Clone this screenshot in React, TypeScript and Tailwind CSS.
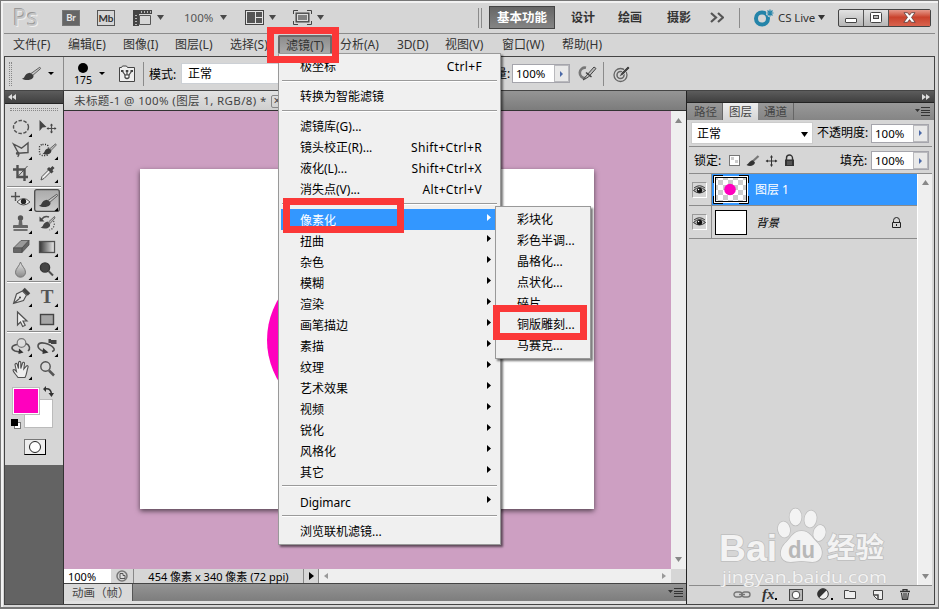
import type { ReactNode } from "react";
import clsx from "clsx";

const menuBar = [
  { label: "文件(F)", width: "w-[55px]" },
  { label: "编辑(E)", width: "w-[55px]" },
  { label: "图像(I)", width: "w-[52px]" },
  { label: "图层(L)", width: "w-[55px]" },
  { label: "选择(S)", width: "w-[48px]" },
  { label: "滤镜(T)", width: "w-[54px]", active: true },
  { label: "分析(A)", width: "w-[57px] ml-2" },
  { label: "3D(D)", width: "w-[48px]" },
  { label: "视图(V)", width: "w-[57px]" },
  { label: "窗口(W)", width: "w-[60px]" },
  { label: "帮助(H)", width: "w-[60px]" },
];

type Item = { label: string; keys?: string; sub?: boolean; active?: boolean };

const filterMenu: Item[][] = [
  [{ label: "极坐标", keys: "Ctrl+F" }],
  [{ label: "转换为智能滤镜" }],
  [
    { label: "滤镜库(G)..." },
    { label: "镜头校正(R)...", keys: "Shift+Ctrl+R" },
    { label: "液化(L)...", keys: "Shift+Ctrl+X" },
    { label: "消失点(V)...", keys: "Alt+Ctrl+V" },
  ],
  [
    { label: "像素化", sub: true, active: true },
    { label: "扭曲", sub: true },
    { label: "杂色", sub: true },
    { label: "模糊", sub: true },
    { label: "渲染", sub: true },
    { label: "画笔描边", sub: true },
    { label: "素描", sub: true },
    { label: "纹理", sub: true },
    { label: "艺术效果", sub: true },
    { label: "视频", sub: true },
    { label: "锐化", sub: true },
    { label: "风格化", sub: true },
    { label: "其它", sub: true },
  ],
  [{ label: "Digimarc", sub: true }],
  [{ label: "浏览联机滤镜..." }],
];

const pixelate = ["彩块化", "彩色半调...", "晶格化...", "点状化...", "碎片", "铜版雕刻...", "马赛克..."];

function Caret({ className }: { className?: string }) {
  return (
    <svg width="7" height="5" viewBox="0 0 7 5" className={clsx("shrink-0", className)}>
      <path d="M0 0h7L3.5 5z" fill="currentColor" />
    </svg>
  );
}

function SmallCaret({ className }: { className?: string }) {
  return (
    <svg width="6" height="3" viewBox="0 0 6 3" className={clsx("shrink-0", className)}>
      <path d="M0 0h6L3 3z" fill="#000" />
    </svg>
  );
}

function Brush() {
  return (
    <>
      <path d="M22.800 5.200 14 11.500l1.800 1.800L23.600 6.600z" fill="#c4c4c4" stroke="#555" strokeWidth=".9" />
      <path d="M13 10.800c-3 .2-4.600 2-5.400 3.700-.6 1.400-1.500 2-2.800 2.300 3.500 1.800 8.800 1.700 11-.8 1-1.200.8-2.300.2-3.100z" fill="#3c3c3c" stroke="none" />
    </>
  );
}

function Tool({ children, corner = true, active }: { children: ReactNode; corner?: boolean; active?: boolean }) {
  return (
    <svg width="26" height="23" viewBox="0 0 26 23" fill="none" stroke="#505050" strokeWidth="1.4" className="block">
      {active && <rect x=".7" y=".7" width="24.600" height="21.600" rx="2" fill="url(#pressed)" stroke="#4c4c4c" strokeWidth="1.300" />}
      {children}
      {corner && <path d="M24 18.500V22h-3.500z" fill="#000" stroke="none" />}
    </svg>
  );
}

function Eye() {
  return (
    <span className="flex h-4 w-[15px] -translate-x-px items-center justify-center border border-[#999] border-r-white border-b-white">
      <svg width="13" height="10" viewBox="0 0 13 10">
        <path d="M.5 5.500Q6.500-.5 12.500 5.500 6.500 10.500.5 5.500z" fill="#bbb" stroke="#333" />
        <circle cx="6.500" cy="5.300" r="2.600" fill="#111" />
        <path d="M1 3Q6.500-1.500 12 3" fill="none" stroke="#333" />
        <circle cx="5.600" cy="4.500" r=".7" fill="#fff" />
      </svg>
    </span>
  );
}

function Separator() {
  return (
    <div className="h-[9px] pt-[3px] px-px">
      <div className="h-[2px] border-t border-[#9a9a9a] bg-white" />
    </div>
  );
}

function Percent({ className }: { className?: string }) {
  return (
    <div className={clsx("flex h-[19px] border border-[#a5a5ac] bg-white", className)}>
      <span className="w-[41px] pl-[3px] text-[11.500px] leading-[17px] text-black">100%</span>
      <span className="flex flex-1 items-center justify-center border border-[#b9b9bd] bg-[#e9e9e9]">
        <svg width="3" height="6" viewBox="0 0 3 6"><path d="M0 0l3 3-3 3z" fill="#4c6aa8" /></svg>
      </span>
    </div>
  );
}

function AppBar() {
  return (
    <div className="flex h-[32px] items-center border-b border-[#8b8b8b] text-[#4a4a4a]">
      <span className="ml-[9px] w-[50px] text-[23px] leading-none text-[#c6c6c6] [text-shadow:-1px_-1px_0_#999,1px_1px_0_#eee]">Ps</span>
      <span className="h-[14px] w-4 bg-[#666] text-center font-[Lato] text-[9.500px] font-bold leading-[14px] text-[#e6e6e6] shadow-[0_0_0_1px_#777]">Br</span>
      <span className="ml-[18px] h-[16px] w-[18px] border border-[#555] text-center font-[Lato] text-[10px] font-bold leading-[14px] text-[#333]">Mb</span>
      <svg width="19" height="16" viewBox="0 0 19 16" className="ml-[18px]">
        <path d="M0 0h19v4H6v12H0z" fill="#454545" />
        <path d="M6.500 5.500h11v9h-11z" fill="#d6d6d6" stroke="#555" />
        <path d="M8 2h10M3 5v10" stroke="#ddd" strokeWidth="1.500" strokeDasharray="1 2" />
      </svg>
      <Caret className="ml-[5px]" />
      <span className="ml-5 w-[30px] text-[11.500px] leading-4 text-[#555]">100%</span>
      <Caret className="ml-[6px]" />
      <svg width="19" height="15" viewBox="0 0 19 15" className="ml-[18px]">
        <rect x=".5" y=".5" width="18" height="14" fill="#e5e5e5" stroke="#444" />
        <path d="M2 2h8v11H2zM11 2h6v5h-6zM11 8h6v5h-6z" fill="#555" />
      </svg>
      <Caret className="ml-[5px]" />
      <svg width="19" height="15" viewBox="0 0 19 15" className="ml-[17px]">
        <path d="M.5 4V.5H5M14 .5h4.500V4M18.500 11v3.500H14M5 14.500H.5V11" fill="none" stroke="#444" />
        <rect x="3" y="3" width="13" height="9" fill="#666" stroke="#444" />
        <rect x="4.500" y="4.500" width="10" height="6" fill="#808080" stroke="#ddd" />
      </svg>
      <Caret className="ml-[5px]" />
      <span className="ml-[154px] h-5 w-[4px] border-x border-[#8b8b8b]" />
      <span className="ml-[7px] h-[23px] w-[66px] border border-[#444] bg-linear-to-b from-[#666] to-[#858585] text-center text-[12.500px] font-bold leading-[21px] text-white">基本功能</span>
      <span className="ml-4 w-[47px] text-xs font-bold text-[#333]">设计</span>
      <span className="w-[49px] text-xs font-bold text-[#333]">绘画</span>
      <span className="w-[43px] text-xs font-bold text-[#333]">摄影</span>
      <svg width="14" height="11" viewBox="0 0 14 11" fill="none" stroke="#555" strokeWidth="2.200"><path d="m1 1 5 4.500L1 10M8 1l5 4.500L8 10" /></svg>
      <span className="ml-[15px] h-5 border-l border-[#8b8b8b]" />
      <svg width="21" height="18" viewBox="0 0 21 18" className="ml-[14px]" fill="none" stroke="#2484a9">
        <circle cx="8" cy="9.500" r="6" strokeWidth="4" />
        <path d="M16 0v8M12 4h8M13.300 1.300l5.400 5.400M18.700 1.300l-5.400 5.400" stroke="#d6d6d6" strokeWidth="3" />
        <path d="M16 .5v7M12.500 4h7M13.500 1.500l5 5M18.500 1.500l-5 5" strokeWidth="1.200" />
      </svg>
      <span className="ml-[3px] w-[39px] whitespace-nowrap text-[11.500px] tracking-[-.1px] text-[#333]">CS Live</span>
      <Caret className="ml-px text-[#333]" />
      <div className="ml-[13px] flex h-[18px] w-[93px] rounded-[2px] border border-[#444] bg-linear-to-b from-[#e2e2e2] to-[#b6b6b6]">
        <span className="flex w-[25px] items-end justify-center border-r border-[#555] pb-[3px]">
          <span className="h-[5px] w-3 rounded-[1px] border border-[#444] bg-white" />
        </span>
        <span className="flex w-[25px] items-center justify-center border-r border-[#555]">
          <svg width="12" height="11" viewBox="0 0 12 11"><rect x=".5" y=".5" width="11" height="10" rx="1" fill="#fff" stroke="#444" /><rect x="3.500" y="3.500" width="5" height="3" fill="#bbb" stroke="#444" /></svg>
        </span>
        <span className="flex flex-1 items-center justify-center bg-linear-to-b from-[#e5988b] via-[#c9412c] via-45% to-[#d9634e]">
          <svg width="13" height="11" viewBox="0 0 13 11"><path d="M1 .7h3.500l2 2.500 2-2.500H12L8.500 5.400l3.700 4.900H8.500l-2-2.700-2 2.700H.8l3.700-4.900z" fill="#fff" stroke="#553b3b" strokeWidth=".8" /></svg>
        </span>
      </div>
    </div>
  );
}

function MenuBar() {
  return (
    <div className="flex h-[22px] items-start pl-[9px] pt-px text-xs leading-[20px] text-[#333]">
      {menuBar.map((m) => (
        <span
          key={m.label}
          className={clsx(
            "h-[20px] shrink-0 whitespace-nowrap",
            m.width,
            m.active && "rounded-t-[2px] border-2 border-b-0 border-[#6b6b6b] bg-linear-to-b from-[#8d8d8d] to-[#adadad] text-center leading-[17px]",
          )}
        >
          {m.label}
        </span>
      ))}
    </div>
  );
}

function OptionsBar() {
  return (
    <div className="flex h-[33px] shrink-0 items-center text-xs text-black">
      <span className="ml-1 h-[24px] w-[3px] border-x border-dotted border-[#888]" />
      <svg width="26" height="23" viewBox="0 0 26 23" className="ml-[5px]"><Brush /></svg>
      <SmallCaret className="ml-[5px]" />
      <span className="ml-[9px] h-full border-l border-[#8b8b8b]" />
      <div className="ml-[9px] flex h-full w-5 flex-col items-center pt-[6px]">
        <span className="size-[10px] rounded-full bg-black" />
        <span className="mt-px text-[10.500px] leading-[13px]">175</span>
      </div>
      <SmallCaret className="ml-[6px]" />
      <svg width="18" height="18" viewBox="0 0 18 18" className="ml-[13px]" fill="none" stroke="#444">
        <path d="M1.500 16.500v-14h2l1-1.500h4l1 1.500h7v14z" fill="#eee" />
        <path d="m4.500 6.500 3 4M9 6v4m4.500-3.500-3 4" strokeWidth="1.200" />
        <path d="M3 6h2.500M7.800 6h2.500M12.500 6H15" strokeWidth="2" />
        <path d="M7 10h4v2.500q-2 2-4 0z" strokeWidth="1.200" fill="#fff" />
      </svg>
      <span className="ml-[7px] h-[24px] border-l border-[#8b8b8b]" />
      <span className="ml-[5px] w-[32px] whitespace-nowrap pt-[2px]">模式:</span>
      <span className="h-[21px] w-[130px] border border-[#ccd0d5] bg-white pl-[6px] leading-[20px]">正常</span>
      <span className="ml-[172px] w-[29px] whitespace-nowrap">流量:</span>
      <Percent className="w-[58px]" />
      <svg width="19" height="17" viewBox="0 0 19 17" className="ml-[8px]" fill="none" stroke="#666">
        <path d="M8 2.800A5 5.200 0 1 0 7.500 13" strokeWidth="2.600" stroke="#777" />
        <path d="m5 15 3.500-4.500L16 2l2 1.500L10.500 12z" fill="#bbb" stroke="#444" />
        <path d="m8 7.500 5.500 4.500" stroke="#444" strokeWidth="1.600" />
      </svg>
      <span className="ml-[6px] h-[24px] border-l border-[#8b8b8b]" />
      <svg width="18" height="18" viewBox="0 0 18 18" className="ml-[9px]" fill="none" stroke="#666">
        <circle cx="7.500" cy="10" r="6.500" strokeWidth="1.300" />
        <circle cx="7.500" cy="10" r="3.500" strokeWidth="1.500" />
        <path d="m6 12 2-4 7-7 2 2-7 7z" fill="#444" stroke="#eee" strokeWidth=".6" />
      </svg>
    </div>
  );
}

function ToolRule({ className }: { className?: string }) {
  return <div className={clsx("mx-[-1px] border-b border-white", className)}><div className="border-b border-[#8b8b8b]" /></div>;
}

function Toolbox() {
  return (
    <div className="flex w-[59px] shrink-0 flex-col border-r border-[#333] bg-[#636363]">
      <div className="flex h-3 items-center bg-linear-to-b from-[#5c5c5c] to-[#404040] pl-[3px]">
        <svg width="8" height="6" viewBox="0 0 8 6"><path d="M4 0v6L0 3zM8 0v6L4 3z" fill="#ddd" /></svg>
      </div>
      <div className="h-[362px] border-t border-[#222] bg-[#d6d6d6] px-[3px]">
        <div className="mx-[2px] mt-[4px] h-[3px] border-y border-dotted border-[#888]" />
        <div className="grid grid-cols-2 pt-[4px]">
          <Tool><ellipse cx="13" cy="12" rx="7.500" ry="6.500" strokeDasharray="3.500 1.500" /></Tool>
          <Tool corner={false}>
            <path d="M5.500 5v11l3-3.500 4-.5z" fill="#444" stroke="none" />
            <path d="M17.500 9v9M13 13.500h9" strokeWidth="1.200" />
            <path d="m16 10.500 1.500-2 1.500 2zM16 16.500l1.500 2 1.500-2zM14.500 12l-2 1.500 2 1.500zM20.500 12l2 1.500-2 1.500z" fill="#444" stroke="none" />
          </Tool>
          <Tool><path d="m5.500 6 8 4.200L20 5v9.500l-9.500.8zm5 9.500c-1.500 1.500-3-.2-1-1.200 2-.5 2 2 .2 4.500" /></Tool>
          <Tool>
            <rect x="5.500" y="6.500" width="9" height="11" rx="3" strokeDasharray="1 1.500" stroke="#222" />
            <path d="m21.500 5.800-6 5.200 1.500 1.500 5.300-5.500z" fill="#bbb" strokeWidth=".8" />
            <path d="M15 10.300c-3 .2-3.800 2-4.500 3.400-.6 1-1 1.500-2 1.800 2.800 1.600 6.500 1.200 8.200-.8.800-1 .8-2 .2-2.700z" fill="#3c3c3c" stroke="none" />
          </Tool>
          <Tool><path d="M9.500 4v12H20M5 8.500h11.500V20" strokeWidth="2.400" /><path d="M9 16.500 19.500 5" strokeWidth="1" /></Tool>
          <Tool>
            <path d="m7 19 1-3.500 8-8 2 2-8 8z" fill="#eee" strokeWidth="1" />
            <path d="m14 7 4.500 4.500M16.500 9l3-3" strokeWidth="3" stroke="#444" />
          </Tool>
        </div>
        <ToolRule className="mt-[2px] mb-px" />
        <div className="grid grid-cols-2">
          <Tool>
            <path d="M7.500 3v9M3 7.500h9" />
            <path d="M9 13q6.500-7 13 0-6.500 6-13 0z" fill="#eee" strokeWidth="1" />
            <circle cx="15.500" cy="12.500" r="2.700" fill="#222" stroke="none" />
          </Tool>
          <Tool active><Brush /></Tool>
          <Tool>
            <circle cx="12.500" cy="6" r="2.700" fill="#555" stroke="none" />
            <path d="M11 8h3l.5 5H19q1 0 1 1v2H5v-2q0-1 1-1h4.500z" fill="#666" stroke="none" />
            <path d="M5.500 18h14" stroke="#444" />
          </Tool>
          <Tool>
            <path d="m20.500 4.500-6 5.500 1.500 1.500L21 6z" fill="#bbb" strokeWidth=".8" />
            <path d="M13.500 9.500c-3 .5-3.800 2.500-4.500 4-.6 1.200-1.300 1.700-2.500 2 3 1.700 7 1.500 9-.8.800-1 .8-2.200.2-3z" fill="#444" stroke="none" />
            <path d="M7.500 7.500c2-3 5-3.500 7.500-2.500" strokeWidth="1.500" />
            <path d="M5.500 4.500v5h5z" fill="#444" stroke="none" />
            <path d="M19.500 9c2 4 0 8-4 9" strokeWidth="1.200" strokeDasharray="1.200 1.500" />
          </Tool>
          <Tool>
            <path d="M5.500 13 13 5.500h8L14 13z" fill="#999" strokeWidth=".8" />
            <path d="M5.500 13H14v4.500H5.500zM14 13l7-7.500V10l-7 7.500z" fill="#666" strokeWidth=".8" />
          </Tool>
          <Tool><rect x="5.500" y="6.500" width="15" height="11" fill="url(#ramp)" strokeWidth="1.300" /></Tool>
          <Tool><path d="M12.500 4c1 4 5 6.500 5 10.200a5 5 0 0 1-10 0C7.500 10.500 11.500 8 12.500 4z" fill="url(#drop)" strokeWidth="1" stroke="#777" /></Tool>
          <Tool><circle cx="11" cy="9.500" r="4.600" fill="#444" stroke="#333" /><path d="m14.500 13 4.500 4.500" strokeWidth="2" /></Tool>
        </div>
        <ToolRule className="mt-0 mb-[2px]" />
        <div className="grid grid-cols-2">
          <Tool>
            <path d="m5.500 18.500 3-9.500 6-3 4 4-3 5.500zm0 0 6-5" fill="#e4e4e4" strokeWidth="1.100" />
            <circle cx="12" cy="12.500" r="1" fill="#333" stroke="none" />
            <path d="m15.500 4 5.500 5.500" strokeWidth="3.500" stroke="#444" />
          </Tool>
          <Tool><text x="13" y="17.500" textAnchor="middle" stroke="none" fill="#555" fontSize="19" fontWeight="bold" fontFamily="'Liberation Serif', serif">T</text></Tool>
          <Tool><path d="M9.500 4v13l3-3 2.200 4.500 2.500-1.200-2.200-4.300H19z" fill="#eee" strokeWidth="1.200" /></Tool>
          <Tool><rect x="6.500" y="6.500" width="13" height="10" fill="#a6a6a6" stroke="#444" /></Tool>
        </div>
        <ToolRule className="mt-0 mb-[2px]" />
        <div className="grid grid-cols-2">
          <Tool>
            <path d="M9 9.500c-6 1-6.500 4.500-2 6.500l4.500 1M18 8.500c4 1.500 4.500 5.500 2 7.500" strokeWidth="1.600" />
            <circle cx="13.500" cy="8" r="4.300" fill="#ddd" stroke="#777" strokeWidth="1.200" />
            <path d="m11 13.500-.5 5.500 5-1.500z" fill="#333" stroke="none" />
          </Tool>
          <Tool>
            <path d="M9.500 16.500C1 12.500 3 6.500 11 8.200c8 1.800 12 7.300 7 8.300" strokeWidth="1.600" />
            <path d="m9 13-.5 6 6-1.500z" fill="#333" stroke="none" />
            <path d="M14.500 4h2.500v1h5.500v4H17V8h-2.500z" fill="#444" stroke="none" />
          </Tool>
          <Tool>
            <path d="M10 19.500c-2-3-5-5.500-5-7.500 1-1.500 2.500.5 3.500 1.500L7 6.500c.5-1.700 2-1.300 2.300 0l1.200 4V4.500c.5-1.500 2-1.500 2.300 0v6L14.500 5c.7-1.300 2-.7 2 .5l-.7 5.500L18.500 8c1-.8 2 0 1.500 1.200-1.500 4-1 7-3 10.300z" fill="#eee" strokeWidth="1.100" />
          </Tool>
          <Tool corner={false}><circle cx="11.500" cy="8.500" r="4.700" fill="#d9d9d9" strokeWidth="1.400" /><path d="m15 12.500 5 5" strokeWidth="2.500" stroke="#555" /></Tool>
        </div>
        {/* foreground / background colours */}
        <div className="relative mt-[5px] h-[44px]">
          <span className="absolute left-4 top-[13px] size-[29px] border border-[#bbb] bg-white" />
          <span className="absolute left-1 top-px size-[28px] border border-[#bbb] bg-[#ff00be] p-px shadow-[inset_0_0_0_1px_#fff]" />
          <svg width="11" height="11" viewBox="0 0 11 11" className="absolute left-[35px] top-0"><path d="M2 3c4-1 6 1 6.500 5" fill="none" stroke="#333" strokeWidth="1.600" /><path d="M0 3l3-3v6zM5.500 7h5.500L8.500 11z" fill="#333" /></svg>
          <span className="absolute left-[6px] top-[36px] size-[7px] border border-[#777] bg-white" />
          <span className="absolute left-[3px] top-[33px] size-[7px] bg-black" />
        </div>
        <div className="mx-auto mt-[9px] flex h-4 w-[22px] translate-x-px items-center justify-center border border-[#777] border-b-black border-r-black bg-[#eee]">
          <span className="size-3 rounded-full border border-[#222] bg-white" />
        </div>
      </div>
    </div>
  );
}

function Canvas() {
  return (
    <div className="flex w-[623px] shrink-0 flex-col border-r border-[#222]">
      <div className="flex h-5 shrink-0 border-b border-[#333] bg-linear-to-b from-[#959595] to-[#7c7c7c]">
        <div className="flex w-[225px] items-center whitespace-nowrap bg-linear-to-b from-[#e2e2e2] to-[#cfcfcf] pl-[10px] pt-px text-[11.500px] text-[#444]">
          <span className="w-[197px] tracking-[.38px]">未标题-1 @ 100% (图层 1, RGB/8) *</span>
          <span className="h-[13px] w-3 rounded-[2px] border border-[#888] text-center text-[12px] leading-[10px]">×</span>
        </div>
      </div>
      <div className="flex h-[458px] shrink-0">
        <div className="w-[607px] overflow-hidden bg-[#cd9fc2] pl-[76px] pt-[58px]">
          <div className="h-[340px] w-[454px] bg-white pl-[127px] pt-[91px] shadow-[0_2px_5px_#0009]">
            <div className="size-[160px] rounded-full bg-[#ff00be]" />
          </div>
        </div>
        <div className="flex flex-1 flex-col items-center justify-between bg-[#efefef] py-[7px] text-[#888]">
          <Caret className="rotate-180" />
          <Caret />
        </div>
      </div>
      <div className="flex h-[15px] shrink-0 border-b border-[#444] text-[11px] leading-[15px] text-black">
        <span className="w-[47px] bg-white pl-1">100%</span>
        <span className="flex w-[23px] items-center justify-center border-r border-[#888] bg-[#d6d6d6]">
          <svg width="12" height="12" viewBox="0 0 12 12" fill="none" stroke="#777"><circle cx="6" cy="6" r="5" strokeWidth="1.500" /><path d="M4 3.500h3v2h2v3H4z" fill="#ddd" stroke="#555" /></svg>
        </span>
        <span className="w-[170px] whitespace-nowrap border-r border-[#888] bg-[#d6d6d6] text-center">454 像素 x 340 像素 (72 ppi)</span>
        <span className="flex w-[15px] items-center justify-center border-r border-[#888] bg-[#d6d6d6]">
          <svg width="5" height="8" viewBox="0 0 5 8"><path d="M0 0l5 4-5 4z" /></svg>
        </span>
        <span className="flex w-[352px] items-center justify-between bg-[#efefef] px-[5px]">
          <svg width="4" height="6" viewBox="0 0 4 6"><path d="M4 0v6L0 3z" fill="#999" /></svg>
          <svg width="4" height="6" viewBox="0 0 4 6"><path d="M0 0v6l4-3z" fill="#999" /></svg>
        </span>
        <span className="flex-1 bg-[#d6d6d6]" />
      </div>
      <div className="flex h-[17px] shrink-0 items-stretch bg-linear-to-b from-[#949494] to-[#7d7d7d]">
        <span className="w-[69px] whitespace-nowrap border-r border-[#555] bg-[#d9d9d9] pl-2 text-[11.500px] leading-[18px] text-[#444]">动画（帧）</span>
        <PanelMenuIcon className="ml-auto mr-[3px]" />
      </div>
      <div className="flex-1 bg-[#e0e0e0]" />
    </div>
  );
}

function PanelMenuIcon({ className }: { className?: string }) {
  return (
    <svg width="15" height="9" viewBox="0 0 15 9" className={clsx("shrink-0 self-center", className)}>
      <path d="M0 2h5L2.500 5zM6 0h9v1H6zM6 3h9v1H6zM6 5h9v1H6zM6 8h9v1H6z" fill="#333" />
    </svg>
  );
}

function LayersPanel() {
  return (
    <div className="flex flex-1 flex-col bg-[#d6d6d6] text-xs text-black">
      <div className="flex h-3 shrink-0 items-center justify-end border-b border-[#222] bg-linear-to-b from-[#5c5c5c] to-[#404040] pr-[4px]">
        <svg width="8" height="6" viewBox="0 0 8 6"><path d="M0 0v6l4-3zM4 0v6l4-3z" fill="#ddd" /></svg>
      </div>
      <div className="flex h-[17px] shrink-0 bg-linear-to-b from-[#999] to-[#858585] text-[11.500px] leading-[18px] text-[#444]">
        <span className="w-9 border-r border-[#666] pl-[7px]">路径</span>
        <span className="w-[35px] bg-linear-to-b from-[#eee] to-[#d6d6d6] text-center">图层</span>
        <span className="w-9 border-r border-[#666] text-center">通道</span>
        <PanelMenuIcon className="ml-auto mr-[4px]" />
      </div>
      <div className="mx-[2px] flex h-[27px] shrink-0 items-center border-b border-[#8b8b8b]">
        <span className="ml-[2px] flex h-[22px] w-[122px] items-center border border-[#ccc] bg-white pl-[5px] pr-[4px] pt-[2px]">正常<Caret className="ml-auto" /></span>
        <span className="ml-[4px] w-[54px] whitespace-nowrap">不透明度:</span>
        <Percent className="w-[58px]" />
      </div>
      <div className="mx-[2px] flex h-[27px] shrink-0 items-center border-b border-[#8b8b8b] pt-px">
        <span className="ml-[5px] w-[35px]">锁定:</span>
        <svg width="66" height="14" viewBox="0 0 66 14" fill="none" stroke="#333">
          <rect x=".5" y="1.500" width="10" height="10" fill="#fff" stroke="#777" />
          <path d="M2 3h3v3H2zM6 6h3v3H6z" fill="#ccc" stroke="none" />
          <path d="m29.500 2-6 5.500" strokeWidth="2.200" stroke="#777" />
          <path d="M24 6.500c-3-.5-3.500 2.500-6.500 4.500 3 2 8 1 8.500-2.500z" fill="#333" stroke="none" />
          <path d="M42.500 2v10M37.500 7h10" />
          <path d="m41 3.500 1.500-2.500L44 3.500zM41 10.500l1.500 2.500 1.500-2.500zM39 5.500 36.500 7 39 8.500zM46 5.500 48.500 7 46 8.500z" fill="#333" stroke="none" />
          <path d="M57.500 6V4a3 3 0 0 1 6 0v2" strokeWidth="1.400" />
          <path d="M56 5.500h9V12h-9z" fill="#333" stroke="none" />
          <path d="M58 8h5M58 10h5" stroke="#777" />
        </svg>
        <span className="ml-[45px] w-[31px] whitespace-nowrap">填充:</span>
        <Percent className="w-[58px]" />
      </div>
      <div className="mx-[2px] flex flex-1 border-b border-[#8b8b8b]">
        <div className="w-[228px]">
          <div className="flex h-[32px] items-center border-b border-[#8b8b8b] bg-[#3397ff] text-white">
            <span className="flex h-full w-[23px] items-center justify-center border-r border-[#8b8b8b] bg-[#d6d6d6]"><Eye /></span>
            <svg width="36" height="29" viewBox="0 0 36 29" className="ml-px">
              <defs>
                <pattern id="checks" width="10" height="10" patternUnits="userSpaceOnUse">
                  <path d="M0 0h10v10H0z" fill="#fff" />
                  <path d="M0 0h5v5H0zM5 5h5v5H5z" fill="#ccc" />
                </pattern>
              </defs>
              <path d="M.5 8V.5H10M26 .5h9.500V8M35.500 21v7.500H26M10 28.500H.5V21" fill="none" stroke="#000" />
              <rect x="1.500" y="1.500" width="33" height="26" fill="none" stroke="#fff" />
              <rect x="2.500" y="2.500" width="31" height="24" fill="url(#checks)" stroke="#000" />
              <circle cx="17" cy="14.500" r="5.800" fill="#ff00be" />
            </svg>
            <span className="ml-[6px] pt-px">图层 1</span>
          </div>
          <div className="flex h-[33px] items-center border-b border-[#8b8b8b]">
            <span className="flex h-full w-[23px] items-center justify-center border-r border-[#8b8b8b]"><Eye /></span>
            <span className="ml-[3px] h-[25px] w-8 border border-black bg-white" />
            <span className="ml-[9px] pt-px text-[11.500px] italic">背景</span>
            <svg width="11" height="11" viewBox="0 0 11 11" className="ml-auto mr-[15px]" fill="none" stroke="#222">
              <path d="M2.500 5V3.500a3 3 0 0 1 6 0V5M1.500 5.500h8v5h-8z" />
              <path d="M5 7h1v2H5z" fill="#222" stroke="none" />
            </svg>
          </div>
        </div>
        <div className="flex flex-1 flex-col items-center justify-between border-l border-white bg-[#efefef] py-[6px] text-[#888]">
          <Caret className="rotate-180" />
          <Caret />
        </div>
      </div>
      <div className="flex h-[18px] shrink-0 items-center pb-px pl-[46px]">
        <svg width="18" height="7" viewBox="0 0 18 7" fill="none" stroke="#777" strokeWidth="1.400"><rect x="1" y="1" width="8" height="5" rx="2.500" /><rect x="9" y="1" width="8" height="5" rx="2.500" /><path d="M6 3.500h6" /></svg>
        <span className="ml-[11px] w-[13px] font-[Liberation_Serif] text-[15px] font-bold italic leading-none text-[#333]">fx</span>
        <span className="mt-2 size-[2px] bg-black" />
        <svg width="14" height="12" viewBox="0 0 14 12" className="ml-[12px]"><rect x=".5" y=".5" width="13" height="11" fill="#bbb" stroke="#444" /><circle cx="7" cy="6" r="3.800" fill="#fff" stroke="#444" /></svg>
        <svg width="16" height="13" viewBox="0 0 16 13" className="ml-[14px]"><circle cx="6" cy="6" r="5.300" fill="#eee" stroke="#333" /><path d="M2.200 9.800A5.300 5.300 0 0 1 9.700 2.200z" fill="#333" /><path d="M14 10h2v2h-2z" /></svg>
        <svg width="12" height="9" viewBox="0 0 12 9" className="ml-[11px]"><path d="M.5 8.500v-8h4l1 1h6v7z" fill="#eee" stroke="#444" /></svg>
        <svg width="10" height="10" viewBox="0 0 10 10" className="ml-[17px]"><path d="M.5.500h9v9h-5l-4-4z" fill="#eee" stroke="#444" /><path d="M1 5h4v4" fill="none" stroke="#444" strokeWidth="1.500" /></svg>
        <svg width="10" height="11" viewBox="0 0 10 11" className="ml-[17px]" fill="none" stroke="#333"><path d="M0 2.500h10M3 2V.5h4V2" strokeWidth="1.300" /><path d="m1.500 4 1 6.500h5l1-6.500M4 4v6M6 4v6" strokeWidth="1.200" /></svg>
      </div>
    </div>
  );
}

function FilterMenu() {
  return (
    <div className="absolute left-[278px] top-[53px] w-[223px] border border-[#999] bg-[#f0f0f0] px-[2px] py-[2px] shadow-[2px_2px_2px_#0008]">
      {filterMenu.map((group, g) => (
        <div key={g}>
          {g > 0 && <Separator />}
          {group.map((item) => (
            <div
              key={item.label}
              className={clsx("flex h-[21px] items-center pl-[19px] pr-[7px] text-xs leading-[21px]", item.active ? "bg-[#3397ff] text-white" : "text-black")}
            >
              <span className={clsx(item.sub && "translate-y-px")}>{item.label}</span>
              {item.keys && <span className="ml-auto mr-[9px] tracking-[.35px]">{item.keys}</span>}
              {item.sub && (
                <svg width="4" height="7" viewBox="0 0 4 7" className="mb-[5px] ml-auto"><path d="M0 0l4 3.500L0 7z" fill="currentColor" /></svg>
              )}
            </div>
          ))}
        </div>
      ))}
    </div>
  );
}

function PixelateMenu() {
  return (
    <div className="absolute left-[495px] top-[206px] w-[96px] border border-[#999] bg-[#f0f0f0] py-[2px] shadow-[2px_2px_2px_#0008]">
      {pixelate.map((label) => (
        <div key={label} className="h-[21px] whitespace-nowrap pl-[21px] text-xs leading-[22px] text-black">{label}</div>
      ))}
    </div>
  );
}

function Watermark() {
  return (
    <svg width="180" height="84" viewBox="0 0 180 84" className="absolute left-[715px] top-[504px]" fill="#f3f3f3" stroke="#bebebe" strokeWidth="1.500" paintOrder="stroke">
      <text x="4" y="57" fontSize="37" fontWeight="bold" textLength="58" lengthAdjust="spacingAndGlyphs" fontFamily="'Liberation Sans', sans-serif">Bai</text>
      <ellipse cx="80.500" cy="13" rx="6" ry="8.500" />
      <ellipse cx="95.500" cy="15" rx="6" ry="8.500" transform="rotate(10 95.500 15)" />
      <ellipse cx="69" cy="25.500" rx="6" ry="8" transform="rotate(-12 69 25.500)" />
      <ellipse cx="104.500" cy="29" rx="6" ry="8" transform="rotate(15 104.500 29)" />
      <path d="M86.500 27c8 0 10 6 15 11 9 8 6 20-4 20-4 0-7-1-11-1s-7 1-11 1c-11 0-13-12-4-20 5-5 7-11 15-11z" />
      <text x="73" y="54" fontSize="24" fontWeight="bold" textLength="27" lengthAdjust="spacingAndGlyphs" fill="#b8b8b8" stroke="none" fontFamily="'Liberation Sans', sans-serif">du</text>
      <text x="112" y="54" fontSize="28" fontWeight="bold" textLength="57" lengthAdjust="spacingAndGlyphs" fontFamily="'Noto Sans CJK SC', sans-serif">经验</text>
      <text x="7" y="79" fontSize="17" textLength="165" lengthAdjust="spacingAndGlyphs" strokeWidth="1" stroke="#c8c8c8" fontFamily="'Open Sans', sans-serif">jingyan.baidu.com</text>
    </svg>
  );
}

export default function App() {
  return (
    <div className="relative h-[609px] w-[939px] overflow-hidden border-2 border-x border-t-1 border-[#777] bg-[#d6d6d6] px-[3px] pt-px font-['Noto_Sans','Noto_Sans_CJK_SC',sans-serif] shadow-[inset_2px_2px_0_#f2f2f2]">
      <svg width="0" height="0" className="absolute">
        <defs>
          <linearGradient id="pressed" x2="0" y2="1"><stop stopColor="#aaa" /><stop offset="1" stopColor="#ccc" /></linearGradient>
          <linearGradient id="ramp"><stop stopColor="#333" /><stop offset="1" stopColor="#eee" /></linearGradient>
          <linearGradient id="drop" x2="0" y2="1"><stop stopColor="#e5e5e5" /><stop offset="1" stopColor="#8a8a8a" /></linearGradient>
        </defs>
      </svg>
      <AppBar />
      <MenuBar />
      <div className="flex h-[549px] w-[931px] flex-col border border-[#444]">
        <OptionsBar />
        <div className="flex min-h-0 flex-1 border-t border-[#444]">
          <Toolbox />
          <Canvas />
          <LayersPanel />
        </div>
      </div>
      {/* menus and callouts lie over the workspace */}
      <div className="absolute left-[-1px] top-[-1px]">
        <FilterMenu />
        <PixelateMenu />
        <Watermark />
        <div className="absolute left-[267px] top-[27px] h-[36px] w-[72px] border-[7px] border-[#fb3838]" />
        <div className="absolute left-[283px] top-[198px] h-[35px] w-[121px] border-[7px] border-[#fb3838]" />
        <div className="absolute left-[493px] top-[305px] h-[35px] w-[94px] border-[7px] border-[#fb3838]" />
      </div>
    </div>
  );
}
